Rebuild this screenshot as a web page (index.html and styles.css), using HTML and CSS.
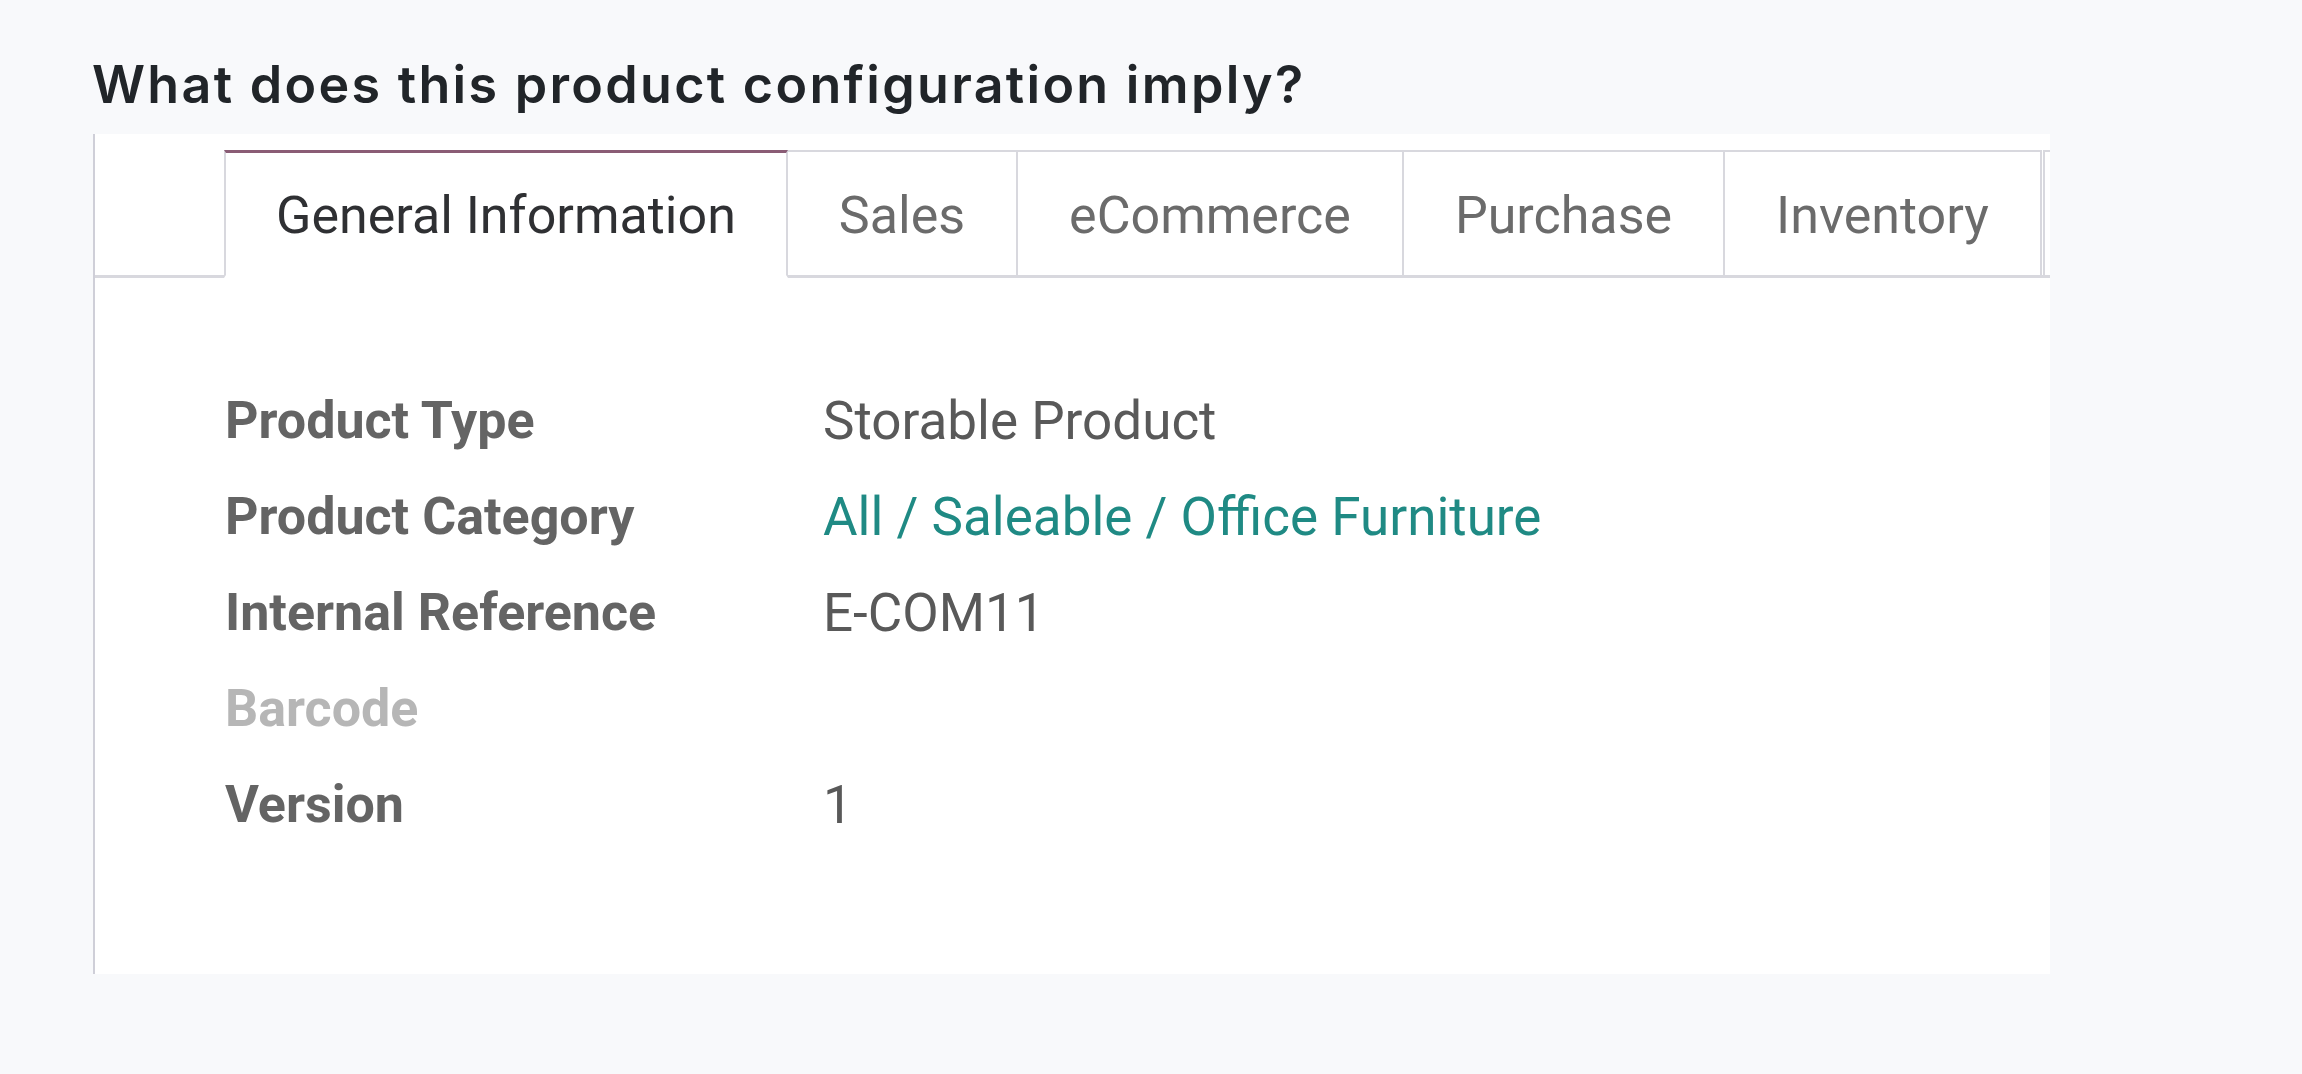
FILE: index.html
```html
<!DOCTYPE html>
<html lang="en">
<head>
<meta charset="utf-8">
<title>Product configuration</title>
<link rel="stylesheet" href="styles.css">
</head>
<body>
<main class="page">
  <h1 class="question">What does this product configuration imply?</h1>
  <section class="shot">
    <nav class="tabs">
      <div class="tab active">General Information</div>
      <div class="tab">Sales</div>
      <div class="tab">eCommerce</div>
      <div class="tab">Purchase</div>
      <div class="tab">Inventory</div>
      <div class="tab stub"></div>
    </nav>
    <div class="fields">
      <div class="label">Product Type</div>
      <div class="value">Storable Product</div>
      <div class="label">Product Category</div>
      <div class="value link">All / Saleable / Office Furniture</div>
      <div class="label">Internal Reference</div>
      <div class="value">E-COM11</div>
      <div class="label muted">Barcode</div>
      <div class="value"></div>
      <div class="label">Version</div>
      <div class="value">1</div>
    </div>
  </section>
</main>
</body>
</html>
```
FILE: styles.css
```css
html, body {
  margin: 0;
  padding: 0;
  background: #f8f9fb;
}

.page {
  padding: 55px 0 0 92px;
}

.question {
  margin: 0 0 19px 0;
  font-family: "Inter", "Liberation Sans", sans-serif;
  font-weight: 600;
  font-size: 52px;
  line-height: 60px;
  color: #212529;
  letter-spacing: 2.3px;
}

.shot {
  width: 1957px;
  height: 840px;
  margin-left: 1px;
  background: #ffffff;
  border-left: 2px solid #cfcfd8;
  overflow: hidden;
  padding-top: 16px;
  box-sizing: border-box;
  font-family: "Roboto", "Liberation Sans", sans-serif;
}

.tabs {
  display: flex;
  align-items: flex-end;
  border-bottom: 3px solid #d8d8de;
  padding-left: 129px;
  white-space: nowrap;
}

.tab {
  flex: none;
  font-size: 52px;
  line-height: 62px;
  padding: 33px 51px 28px 51px;
  color: #6b6b6b;
  border-top: 2px solid #d8d8de;
  border-right: 2px solid #d8d8de;
  margin-bottom: -3px;
  border-bottom: 3px solid #d8d8de;
}

.tab.active {
  color: #2f3033;
  border-top: 3px solid #8a5c75;
  border-left: 2px solid #d8d8de;
  border-bottom-color: #ffffff;
  padding: 32px 50px 28px 50px;
}

.tab.stub {
  width: 120px;
  height: 62px;
  padding-left: 0;
  padding-right: 0;
  border-left: 2px solid #d8d8de;
  margin-left: 1px;
}

.fields {
  display: grid;
  grid-template-columns: 598px 1fr;
  grid-auto-rows: 96px;
  margin-top: 95px;
  padding-left: 130px;
  font-size: 53px;
  line-height: 96px;
}

.label {
  font-weight: 700;
  font-size: 52px;
  color: #646464;
}

.label.muted {
  color: #b6b6b6;
}

.value {
  color: #595959;
}

.value.link {
  color: #1f8a84;
}
```
